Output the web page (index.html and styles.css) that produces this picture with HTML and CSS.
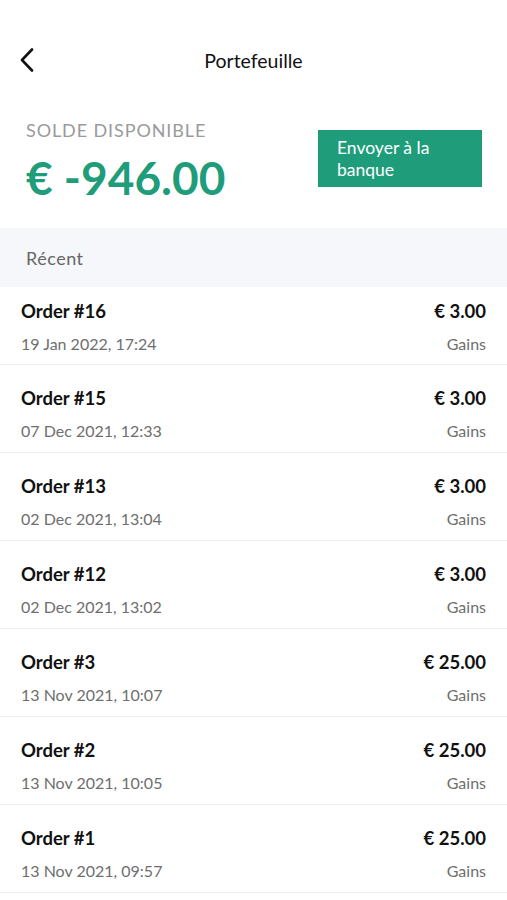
FILE: index.html
```html
<!DOCTYPE html>
<html lang="fr">
<head>
  <meta charset="UTF-8">
  <title>Portefeuille</title>
  <link rel="stylesheet" href="styles.css">
</head>
<body>
  <header class="topbar">
    <a class="back" href="#">
      <svg width="14" height="24" viewBox="0 0 14 24">
        <path d="M12 1.5 L2 12 L12 22.5" fill="none" stroke="#111" stroke-width="2.6" stroke-linecap="round" stroke-linejoin="round"/>
      </svg>
    </a>
    <h1>Portefeuille</h1>
  </header>

  <section class="balance">
    <div class="balance-info">
      <p class="balance-label">SOLDE DISPONIBLE</p>
      <p class="balance-amount">€ -946.00</p>
    </div>
    <button class="bank-btn" type="button">Envoyer à la<br>banque</button>
  </section>

  <div class="section-title">Récent</div>

  <ul class="orders">
    <li class="order">
      <div class="order-left"><span class="order-name">Order #16</span><span class="order-date">19 Jan 2022, 17:24</span></div>
      <div class="order-right"><span class="order-amount">€ 3.00</span><span class="order-type">Gains</span></div>
    </li>
    <li class="order">
      <div class="order-left"><span class="order-name">Order #15</span><span class="order-date">07 Dec 2021, 12:33</span></div>
      <div class="order-right"><span class="order-amount">€ 3.00</span><span class="order-type">Gains</span></div>
    </li>
    <li class="order">
      <div class="order-left"><span class="order-name">Order #13</span><span class="order-date">02 Dec 2021, 13:04</span></div>
      <div class="order-right"><span class="order-amount">€ 3.00</span><span class="order-type">Gains</span></div>
    </li>
    <li class="order">
      <div class="order-left"><span class="order-name">Order #12</span><span class="order-date">02 Dec 2021, 13:02</span></div>
      <div class="order-right"><span class="order-amount">€ 3.00</span><span class="order-type">Gains</span></div>
    </li>
    <li class="order">
      <div class="order-left"><span class="order-name">Order #3</span><span class="order-date">13 Nov 2021, 10:07</span></div>
      <div class="order-right"><span class="order-amount">€ 25.00</span><span class="order-type">Gains</span></div>
    </li>
    <li class="order">
      <div class="order-left"><span class="order-name">Order #2</span><span class="order-date">13 Nov 2021, 10:05</span></div>
      <div class="order-right"><span class="order-amount">€ 25.00</span><span class="order-type">Gains</span></div>
    </li>
    <li class="order">
      <div class="order-left"><span class="order-name">Order #1</span><span class="order-date">13 Nov 2021, 09:57</span></div>
      <div class="order-right"><span class="order-amount">€ 25.00</span><span class="order-type">Gains</span></div>
    </li>
  </ul>
</body>
</html>
```

FILE: styles.css
```css
/* Page */
body {
    margin: 0;
    background-color: #ffffff;
    font-family: "Lato", "Open Sans", sans-serif;
    color: #111111;
}

p {
    margin: 0;
}

/* Top bar */
.topbar {
    position: relative;
    height: 40px;
    padding-top: 40px;
    display: flex;
    align-items: center;
    justify-content: center;
}

.topbar h1 {
    margin: 0;
    font-size: 19.5px;
    font-weight: 400;
    color: #111111;
}

.back {
    position: absolute;
    left: 20px;
    top: 48px;
    display: flex;
}

/* Balance */
.balance {
    display: flex;
    justify-content: space-between;
    align-items: flex-start;
    padding: 39px 25px 25px 26px;
}

.balance-label {
    font-size: 18px;
    letter-spacing: 0.9px;
    color: #9a9a9a;
    line-height: 22px;
}

.balance-amount {
    margin-top: 12px;
    font-size: 46px;
    font-weight: 700;
    color: #1f9d7a;
    line-height: 50px;
}

.bank-btn {
    margin-top: 11px;
    width: 164px;
    height: 57px;
    padding: 0 0 0 19px;
    text-align: left;
    background-color: #1f9d7b;
    color: #ffffff;
    border: none;
    font-family: inherit;
    font-size: 17.5px;
    line-height: 22px;
    cursor: pointer;
}

/* Recent list */
.section-title {
    height: 59px;
    display: flex;
    align-items: center;
    padding-left: 26px;
    background-color: #f6f7fa;
    font-size: 18px;
    letter-spacing: 0.5px;
    color: #666666;
}

.orders {
    list-style: none;
    margin: 0;
    padding: 0;
}

.order {
    display: flex;
    justify-content: space-between;
    box-sizing: border-box;
    height: 88px;
    padding: 21px 21px 0;
    border-bottom: 1px solid #ededed;
}

/* first row sits tight under the section bar */
.order:first-child {
    height: 78px;
    padding-top: 12px;
}

.order-left,
.order-right {
    display: flex;
    flex-direction: column;
}

.order-right {
    align-items: flex-end;
}

.order-name,
.order-amount {
    font-size: 18.5px;
    font-weight: 700;
    line-height: 24px;
    color: #111111;
}

.order-date,
.order-type {
    margin-top: 9px;
    font-size: 16px;
    line-height: 24px;
    color: #6e6e6e;
}
```
